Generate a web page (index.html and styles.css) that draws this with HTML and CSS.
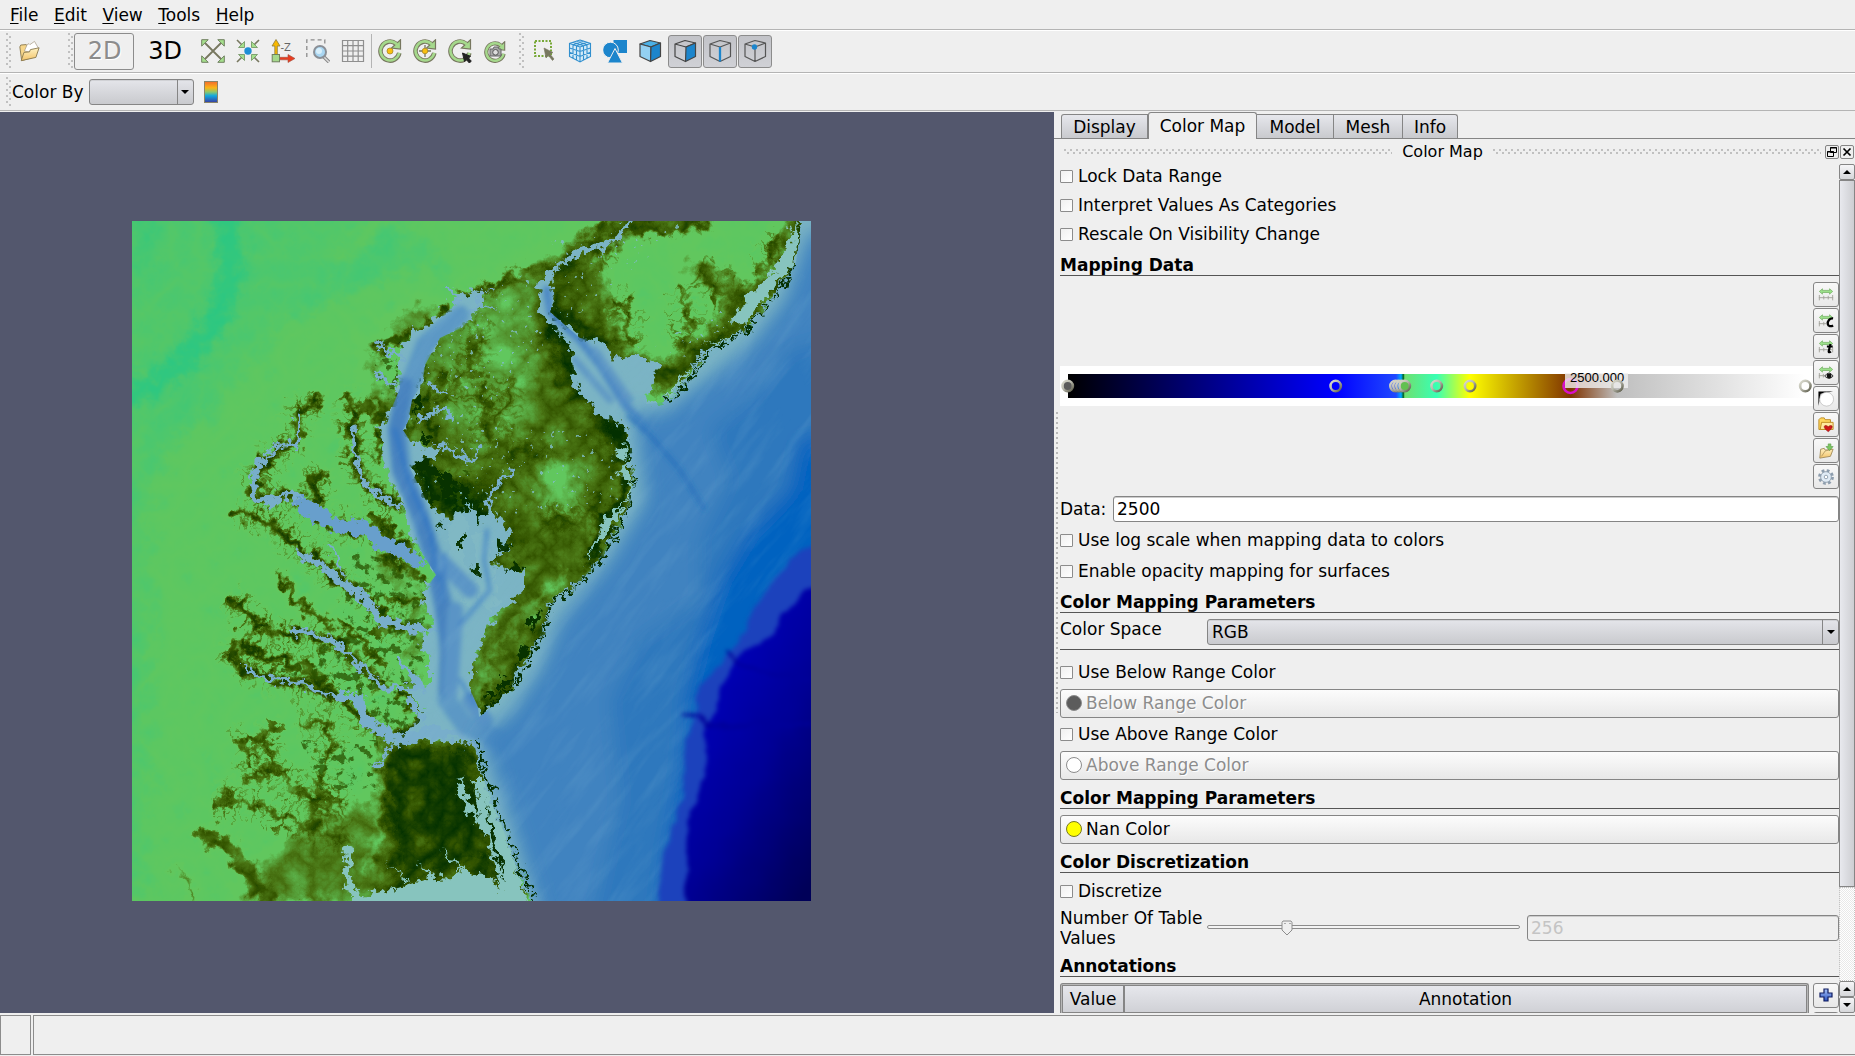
FILE: index.html
```html
<!DOCTYPE html>
<html lang="en">
<head>
<meta charset="utf-8">
<title>Color Map</title>
<link rel="stylesheet" href="styles.css">
</head>
<body>
<svg width="0" height="0" class="defs">
  <defs>
    <linearGradient id="folder" x1="0" y1="0" x2="0" y2="1"><stop offset="0" stop-color="#fff2c4"/><stop offset="1" stop-color="#f3c46a"/></linearGradient>
    <linearGradient id="rainbow" x1="0" y1="0" x2="0" y2="1"><stop offset="0" stop-color="#f26a2c"/><stop offset=".3" stop-color="#fbb515"/><stop offset=".5" stop-color="#8cc86a"/><stop offset=".68" stop-color="#10a8e0"/><stop offset="1" stop-color="#3b3ba0"/></linearGradient>
    <linearGradient id="metal" x1="0" y1="0" x2="1" y2="1"><stop offset="0" stop-color="#dcdcd0"/><stop offset=".45" stop-color="#b8b8ac"/><stop offset="1" stop-color="#5a5a48"/></linearGradient>
    <linearGradient id="plus" x1="0" y1="0" x2="0" y2="1"><stop offset="0" stop-color="#a8c4f8"/><stop offset="1" stop-color="#2850c0"/></linearGradient>
    <symbol id="range" viewBox="0 0 18 18">
      <path d="M1.500 5 5 2v1.800h8V2l3.500 3L13 8V6.200H5V8z" fill="#9be08a" stroke="#6faf5f" stroke-width=".8"/>
    </symbol>
    <symbol id="rotate" viewBox="0 0 24 24">
      <path d="M21.300 14A9.500 9.500 0 1 1 18 4.700" fill="none" stroke="#77775f" stroke-width="4.600"/>
      <path d="M22.500 .8v9.200l-9-1z" fill="#a5d98c" stroke="#77775f" stroke-width="1.200"/>
      <path d="M21.300 13.700A9.500 9.500 0 1 1 19 5.500" fill="none" stroke="#a5d98c" stroke-width="2.600"/>
    </symbol>
    <symbol id="opener" viewBox="0 0 24 24">
      <path d="M2 7.500l1-2 6-.5 1 2 7-.500 1 12-14 4z" fill="#f7d68a" stroke="#8a7a50"/>
      <path d="M7 12l3-7 2-1 1 1 5-3.500 4 7-3 6z" fill="#fff" stroke="#a89c88" stroke-width=".8"/>
      <path d="M3.500 22.500 6.500 13.500l6-.5 1-2.500 9.500-2-3.500 10.500z" fill="url(#folder)" stroke="#8a7a50"/>
    </symbol>
  </defs>
</svg>

<nav class="menubar"><span><u>F</u>ile</span><span><u>E</u>dit</span><span><u>V</u>iew</span><span><u>T</u>ools</span><span><u>H</u>elp</span></nav>

<div class="toolbar main-tools">
  <i class="grip"></i>
  <button class="tool open"><svg viewBox="0 0 24 24"><use href="#opener"/></svg></button>
  <i class="grip"></i>
  <button class="mode active">2D</button>
  <button class="mode">3D</button>
  <button class="tool"><svg viewBox="0 0 24 24"><path d="M4 4 20 20M20 4 4 20" stroke="#77775f" stroke-width="1.800"/><g fill="#a5e08c" stroke="#6f7f5f"><path d="M.7.7h6.500L.7 7.200zM23.300.7v6.500L16.800.7zM.7 23.300v-6.500l6.500 6.500zM23.300 23.300h-6.500l6.500-6.500z"/></g></svg></button>
  <button class="tool"><svg viewBox="0 0 24 24"><path d="M1 1 6 6M23 1l-5 5M1 23l5-5M23 23l-5-5" stroke="#77775f" stroke-width="1.600"/><g fill="#a5e08c" stroke="#6f8f5f" stroke-width=".8"><path d="M8.500 8.500H2.500l6-6zM15.500 8.500v-6l6 6zM8.500 15.500v6l-6-6zM15.500 15.500h6l-6 6z"/></g><circle cx="12" cy="12" r="3.700" fill="#1e8fd5"/></svg></button>
  <button class="tool"><svg viewBox="0 0 24 24"><path d="M3.800 16V7H1l4-6.500L9 7H6.300v9z" fill="#f8b800" stroke="#8a7a40" stroke-width=".8"/><path d="M8 18.300h9V15.500l7 4-7 4v-2.700H8z" fill="#e83c20" stroke="#a05040" stroke-width=".6"/><rect x="1.200" y="15.500" width="7.300" height="7.300" fill="#a5d98c" stroke="#6f7f5f"/><text x="9.500" y="11.800" class="axis">-Z</text></svg></button>
  <button class="tool"><svg viewBox="0 0 24 24"><path d="M.8 18V.8h18V6" fill="none" stroke="#8c8c8c" stroke-width="1.300" stroke-dasharray="4 3"/><path d="m17.500 17.500 5.500 5.500" stroke="#888" stroke-width="3.500"/><path d="m17.500 17.500 5.500 5.500" stroke="#ddd" stroke-width="1.500"/><circle cx="14" cy="13" r="6" fill="#a9d6f2" stroke="#8a8f96" stroke-width="2"/><circle cx="13" cy="12" r="3" fill="#d8effb"/></svg></button>
  <button class="tool"><svg viewBox="0 0 24 24"><path d="M1.500 1.500h21v21h-21zM6.700 1.500v21M12 1.500v21M17.200 1.500v21M1.500 6.700h21M1.500 12h21M1.500 17.200h21" fill="none" stroke="#8f8f8f" stroke-width="1.200"/></svg></button>
  <i class="sep"></i>
  <button class="tool"><svg viewBox="0 0 24 24"><use href="#rotate"/><circle cx="12" cy="12" r="3" fill="#f8c010" stroke="#a8862a" stroke-width=".8"/></svg></button>
  <button class="tool"><svg viewBox="0 0 24 24"><use href="#rotate"/><path d="M12 6v12M6 12h12" stroke="#77775f" stroke-width="1.300"/><circle cx="12" cy="12" r="2.800" fill="#f8c010" stroke="#a8862a" stroke-width=".8"/></svg></button>
  <button class="tool"><svg viewBox="0 0 24 24"><use href="#rotate"/><path d="m14.500 14 2 8.500 1.800-2 3 3.500 2-1.800-3-3.400 2.200-1.500z" fill="#222" stroke="#222"/></svg></button>
  <button class="tool"><svg viewBox="0 0 24 24"><g transform="translate(1 2) scale(.92)"><use href="#rotate" width="24" height="24"/></g><path d="M7 10h3l1-2h4l1 2h2v7H7z" fill="#a8a8a8" stroke="#666"/><circle cx="12.500" cy="13.300" r="2.800" fill="#ddd" stroke="#555"/></svg></button>
  <i class="grip wide"></i>
  <button class="tool"><svg viewBox="0 0 24 24"><path d="M2 2h16v15H2z" fill="none" stroke="#78a838" stroke-width="2" stroke-dasharray="2 1.500"/><path d="m11 9 9 4.500-3 1.500 4 5-1.500 1.500-4-5-2.500 2.500z" fill="#77775f" stroke="#77775f" stroke-width=".6"/></svg></button>
  <button class="tool"><svg viewBox="0 0 24 24"><path d="m12 1 10.500 3.500v13L12 23 1.500 17.500v-13z" fill="#d4ebf8"/><path d="m12 1 10.500 3.500v13L12 23 1.500 17.500v-13zM1.500 4.500 12 8l10.500-3.500M12 8v15M5 5.700v14M8.500 6.800v14.500M15.500 6.800v14.500M19 5.700v14M1.500 9 12 12.500 22.500 9M1.500 13.300 12 17.500l10.500-4.200M5 3.300l10.500 3.500M8.500 2l10.500 3.700M19 3.300 8.500 6.800M15.500 2 5 5.700" fill="none" stroke="#318fce" stroke-width="1.100"/></svg></button>
  <button class="tool"><svg viewBox="0 0 24 24" fill="#1c85cc"><rect x="10.500" y="1" width="13.500" height="13"/><circle cx="7.500" cy="11" r="7.800" stroke="#efefef"/><path d="m12 9.500 7.500 14.500h-15z" stroke="#efefef"/></svg></button>
  <button class="tool"><svg viewBox="0 0 24 24" stroke="#454545" stroke-width="1.200" stroke-linejoin="round"><path d="m2 5 10-3.500L22.500 4 13 8z" fill="#4bb0e6"/><path d="M2 5l11 3-.5 14.500L2 17.500z" fill="#93d0f2"/><path d="m13 8 9.500-4v13.500l-10 5z" fill="#1c85cc"/></svg></button>
  <button class="tool pressed first"><svg viewBox="0 0 24 24" fill="none" stroke="#454545" stroke-width="1.200" stroke-linejoin="round"><path d="m2 5 10-3.500L22.500 4 13 8zM2 5v12.500l10.500 5"/><path d="m13 8 9.500-4v13.500l-10 5z" fill="#1c85cc"/></svg></button>
  <button class="tool pressed"><svg viewBox="0 0 24 24" fill="none" stroke="#555" stroke-width="1.200" stroke-linejoin="round"><path d="m2 5 10-3.500L22.500 4 12 8zM2 5v12.500l10 5 10.500-5V4"/><path d="M12 8v14.500" stroke="#1c85cc" stroke-width="2.300"/></svg></button>
  <button class="tool pressed"><svg viewBox="0 0 24 24" fill="none" stroke="#555" stroke-width="1.200" stroke-linejoin="round"><path d="m2 5 10-3.500L22.500 4 12 8zM2 5v12.500l10 5 10.500-5V4M12 8v14.500"/><circle cx="11.500" cy="8" r="2.700" fill="#1c85cc" stroke="none"/></svg></button>
</div>

<div class="toolbar color-tools">
  <i class="grip"></i><span class="color-by">Color By</span>
  <div class="combo small"><span></span><b class="arrow"></b></div>
  <svg class="ramp-icon" width="14" height="22"><rect x=".5" y=".5" width="13" height="21" fill="url(#rainbow)" stroke="#8a8468"/></svg>
</div>

<main>
<section class="view">
<svg class="terrain" viewBox="132 221 679 680" width="679" height="680">
  <defs>
    <filter id="elevation" x="132" y="221" width="679" height="680" filterUnits="userSpaceOnUse" color-interpolation-filters="sRGB">
      <feTurbulence type="turbulence" baseFrequency=".035" numOctaves="5" seed="8" result="t"/>
      <feColorMatrix in="t" values="1.200 0 0 0 0 1.200 0 0 0 0 1.200 0 0 0 0 0 0 0 0 1" result="n"/>
      <feTurbulence type="fractalNoise" baseFrequency=".08" numOctaves="4" seed="4" result="w"/>
      <feDisplacementMap in="SourceGraphic" in2="w" scale="24" xChannelSelector="R" yChannelSelector="G" result="d"/>
      <feComposite in="d" in2="n" operator="arithmetic" k1="-.3" k2="1" k3=".3" k4="-.06"/>
      <feComponentTransfer>
        <feFuncR type="table" tableValues=".012 .086 .204 .29 .337 .384 .384 .36 .29 .19 .11"/>
        <feFuncG type="table" tableValues=".19 .243 .333 .46 .62 .784 .784 .784 .784 .784 .776"/>
        <feFuncB type="table" tableValues="0 0 0 .08 .22 .37 .37 .384 .44 .5 .54"/>
        <feFuncA type="linear" slope="0" intercept="1"/>
      </feComponentTransfer>
    </filter>
    <filter id="coast" x="100" y="190" width="740" height="740" filterUnits="userSpaceOnUse" color-interpolation-filters="sRGB">
      <feTurbulence type="fractalNoise" baseFrequency=".13" numOctaves="3" seed="3"/>
      <feDisplacementMap in="SourceGraphic" scale="17" xChannelSelector="R" yChannelSelector="G"/>
    </filter>
    <filter id="shelf" x="500" y="400" width="400" height="540" filterUnits="userSpaceOnUse" color-interpolation-filters="sRGB">
      <feTurbulence type="fractalNoise" baseFrequency=".04" numOctaves="4" seed="7"/>
      <feDisplacementMap in="SourceGraphic" scale="12" xChannelSelector="R" yChannelSelector="G"/>
      <feGaussianBlur stdDeviation="2.200"/>
    </filter>
    <filter id="swell" x="0" y="0" width="1000" height="1000" filterUnits="userSpaceOnUse" color-interpolation-filters="sRGB">
      <feTurbulence type="fractalNoise" baseFrequency=".014 .08" numOctaves="4" seed="5"/>
      <feColorMatrix values="0 0 0 0 .55 0 0 0 0 .75 0 0 0 0 .85 1.600 0 0 0 -.7"/>
    </filter>
    <filter id="speck" x="132" y="221" width="679" height="680" filterUnits="userSpaceOnUse" color-interpolation-filters="sRGB">
      <feTurbulence type="fractalNoise" baseFrequency=".11" numOctaves="5" seed="11"/>
      <feColorMatrix values="0 0 0 0 .16 0 0 0 0 .32 0 0 0 0 0 9 0 0 0 -5"/>
      <feComposite in2="SourceAlpha" operator="in"/>
    </filter>
    <filter id="glint" x="132" y="221" width="679" height="680" filterUnits="userSpaceOnUse" color-interpolation-filters="sRGB">
      <feTurbulence type="fractalNoise" baseFrequency=".2" numOctaves="2" seed="21"/>
      <feColorMatrix values="0 0 0 0 .5 0 0 0 0 .74 0 0 0 0 .78 26 0 0 0 -18.500"/>
      <feComposite in2="SourceAlpha" operator="in"/>
    </filter>
    <filter id="b2" x="-40%" y="-40%" width="180%" height="180%"><feGaussianBlur stdDeviation="1.300"/></filter>
    <filter id="b3" x="-40%" y="-40%" width="180%" height="180%"><feGaussianBlur stdDeviation="2.500"/></filter>
    <filter id="b10" x="-40%" y="-40%" width="180%" height="180%"><feGaussianBlur stdDeviation="9"/></filter>
    <linearGradient id="deep" gradientUnits="userSpaceOnUse" x1="690" y1="720" x2="850" y2="810"><stop offset="0" stop-color="#0000b8"/><stop offset=".45" stop-color="#000096"/><stop offset="1" stop-color="#000058"/></linearGradient>
    <path id="valleys" d="M298 408 297 442 262 462 252 490 268 503 293 492 313 515 340 530 370 530 413 555M298 412 318 400M352 425 357 462 363 482 397 508M346 395 356 410 350 430M320 505 312 480 325 470M235 513 265 520 290 540 317 560 341 583 368 600 385 622 412 628M230 598 250 618 270 632 293 632 332 640 354 660 385 688M245 645 265 655 300 665 325 680M232 642 235 662 244 670 262 678 302 683 341 697 365 720 401 738"/>
    <path id="creeks" d="M250 760 242 745 250 735 266 737 273 767 310 800 313 823M330 720 332 753 317 787 315 820M300 725 330 722M215 805 262 805 284 817 310 827 346 840M222 788 236 805M273 767 245 780M345 800 320 805M480 325 470 370 440 400M550 445 505 455 512 470 500 490M545 520 580 525 600 500M480 390 490 440 515 380M630 340 628 310 615 300M680 290 690 330 680 350M583 260 610 245M700 270 720 290 750 300M780 240 760 270"/>
    <path id="sea" d="M802 215 796 262 783 282 763 308 747 328 703 352 683 385 663 402 646 404 653 382 660 365 637 355 617 360 603 342 580 338 550 312 555 293 548 285 562 265 587 252 620 243 625 228 634 218 628 219 619 228 615 240 580 247 555 266 537 284 541 295 540 312 553 328 572 348 573 382 587 398 603 418 627 425 630 448 632 482 628 505 613 535 595 565 570 587 548 603 544 627 533 650 513 677 509 693 479 717 478 707 469 687 478 647 491 623 509 603 526 587 526 573 495 565 490 562 507 548 510 535 500 518 488 508 480 525 470 502 457 522 430 508 417 482 410 468 443 450 413 445 403 430 408 422 412 400 423 382 425 365 440 338 463 327 480 310 487 292 477 290 458 297 452 307 428 328 417 328 403 345 397 358 400 388 390 412 378 432 387 478 403 498 403 515 417 545 436 575 422 593 434 627 420 640 429 660 429 683 404 687 423 710 412 727 401 737 392 747 416 740 456 743 473 742 482 777 495 810 508 843 517 870 535 910 830 910 830 215z"/>
    <clipPath id="seaClip"><use href="#sea"/></clipPath>
  </defs>

  <!-- ground elevation as grey levels, coloured by the filter -->
  <g filter="url(#elevation)" fill="none" stroke-linejoin="round" stroke-linecap="round">
    <rect x="100" y="190" width="760" height="760" fill="#a6a6a6"/>
    <g filter="url(#b10)">
      <path d="M100 190h280L240 380 100 520z" fill="#c0c0c0"/>
      <path d="M100 190H150V900H100z" fill="#bcbcbc"/>
      <path d="M225 200 232 270 212 330 170 375 120 400" stroke="#f6f6f6" stroke-width="16"/>
      <path d="M150 190 138 280" stroke="#e0e0e0" stroke-width="12"/>
      <path d="M300 310 400 230M150 450 200 400M330 290 430 250" stroke="#cacaca" stroke-width="20"/>
      <path d="M470 300 540 260 600 250 640 420 650 510 590 590 530 680 480 730 455 700 475 640 500 600 490 540 400 500 390 410 420 340z" fill="#3a3a3a"/>
      <path d="M460 300 530 285 535 380 520 440 470 450 435 400 440 340z" fill="#626262"/>
      <path d="M545 460 578 475 575 515 540 510z" fill="#787878"/>
      <path d="M556 270 600 240 640 215 700 215M560 310 600 345 640 370 665 380 740 320 790 270 800 215" stroke="#0c0c0c" stroke-width="26"/>
      <path d="M690 265 740 290 725 320" stroke="#303030" stroke-width="20"/>
      <path d="M378 735H480L530 910H340L340 830 380 820z" fill="#1a1a1a"/>
      <path d="M382 745H465L500 860 400 880 384 820z" fill="#0c0c0c"/>
      <path d="M546 320 580 380 610 420 628 460" stroke="#040404" stroke-width="34"/>
      <path d="M320 815 380 800 375 905 230 905 270 850z" fill="#4c4c4c"/>
      <path d="M420 480 470 510 490 550" stroke="#000" stroke-width="48"/>
      <path d="M600 590 560 620 480 720" stroke="#101010" stroke-width="20"/>
      <path d="M395 330 430 310M370 350 385 420M380 560 420 600 410 710" stroke="#303030" stroke-width="16"/>
    </g>
    <g filter="url(#b2)" stroke-dasharray="2 7" stroke-linecap="butt">
      <use href="#valleys" stroke="#383838" stroke-width="34"/>
      <use href="#creeks" stroke="#383838" stroke-width="36"/>
    </g>
    <g filter="url(#b3)" stroke="#181818" stroke-width="8">
      <use href="#valleys" stroke-width="10"/>
      <use href="#creeks" stroke="#202020" stroke-width="7"/>
      <path d="M477 300 430 325 400 340 375 350M400 390 385 420 378 445M413 370 405 430M440 380 425 400 435 440M280 575 300 605 330 625M330 570 400 630M378 460 380 400M380 520 410 555M385 560 425 580M390 600 425 600M340 620 385 665"/>
      <path d="M205 835 230 845 250 875 270 905" stroke="#303030" stroke-width="17"/>
      <path d="M176 868 192 885 192 905M310 850 305 880 320 905" stroke="#444" stroke-width="6"/>
      <path d="M376 800 378 840 364 870" stroke="#606060" stroke-width="8"/>
      <path d="M478 700 488 660 520 620 565 575" stroke="#585858" stroke-width="8"/>
      <path d="M400 690 425 720 405 735M625 435 625 490 590 560 600 520" stroke="#000"/>
      <path d="M530 270 500 285 460 300M600 225 660 230 700 222" stroke="#282828" stroke-width="10"/>
    </g>
  </g>
  <g filter="url(#speck)" opacity=".75">
    <path d="M370 345 440 320 430 380 400 470 370 460 385 410z"/>
    <path d="M400 470 480 470 500 520 450 540z"/>
    <path d="M350 550 425 570 425 730 380 735 330 680 260 675 300 650 340 640z"/>
    <path d="M300 740 378 740 378 790 320 790z"/>
  </g>
  <path filter="url(#glint)" d="M440 290 550 270 560 330 590 340 640 350 740 300 770 320 700 360 560 330 480 420 630 440 620 500 500 520 410 480 430 350zM550 240 690 222 560 330 545 290z" opacity=".8"/>

  <!-- open water, bays and rivers -->
  <g filter="url(#coast)">
    <use href="#sea" fill="#7bb4c4"/>
    <g fill="none" stroke="#78aecb" stroke-linecap="round" stroke-linejoin="round">
      <path d="M298 415 297 442 280 445 260 462" stroke-width="5"/>
      <path d="M260 462 252 482 255 498 267 503 293 492 303 505" stroke-width="7"/>
      <path d="M303 505 337 526 363 528 383 542 415 560" stroke-width="14" stroke="#689fcc"/>
      <path d="M352 428 357 462 363 482 383 498 407 508" stroke-width="4.500"/>
      <path d="M300 555 319 563 341 583 368 600 381 622 412 628 434 630" stroke-width="7"/>
      <path d="M293 630 332 640 354 660 385 688 420 687" stroke-width="5"/>
      <path d="M244 667 262 678 302 683 319 693 341 697" stroke-width="4"/>
      <path d="M341 697 359 697 363 720 385 732 405 740 429 732 473 735" stroke-width="10"/>
      <path d="M448 290 458 300M378 345 403 358M375 375 397 385M430 385 445 395M420 420 445 405 452 420M440 445 470 462 480 450M487 510 490 495 503 478 513 470" stroke-width="4"/>
      <path d="M470 315 480 305 497 308M475 300 490 290M330 545 345 575M392 745 378 765M500 750 470 745" stroke-width="3"/>
      <path d="M408 700 425 720M400 660 425 690" stroke-width="6"/>
      <path d="M460 520 455 560 470 600M480 540 490 600" stroke-width="16" stroke="#80b8c4"/>
    </g>
    <g fill="#87c4be">
      <path d="M346 845 352 848 350 870 358 895 400 888 425 880 448 878 462 872 445 852 438 850 448 852 465 872 485 875 495 880 500 890 488 840 470 815 458 790 462 778 468 800 478 818 474 780 484 780 508 843 520 880 528 905 350 905 344 870z"/>
      <path d="M385 860 405 880 425 884 408 880zM415 862 430 880 438 882z"/>
      <path d="M797 215 785 250 770 275 745 298 730 325 745 322 775 285 795 260zM690 365 665 398 680 388zM700 345 740 335 720 342z"/>
      <path d="M625 445 614 455 628 462 615 475 630 478 625 500 605 520 585 560 610 530 632 490z"/>
    </g>
    <g fill="#083200">
      <path d="M440 470 455 480 452 500 440 490zM425 480 440 500 432 508zM460 530 466 545 460 550zM440 520 444 528 438 530zM470 568 480 566 478 575z"/>
      <path d="M528 620 540 610 532 635zM520 645 530 650 515 668zM500 675 512 680 500 695zM485 690 498 690 488 700zM415 395 424 402 416 418zM420 430 434 440 418 445zM415 460 430 462 440 475 425 480zM458 480 472 490 462 500zM410 375 418 380 408 395zM496 540 510 545 498 552zM515 560 526 570 508 572z"/>
      <path d="M486 800 492 825 498 850 504 880 497 860 490 835zM468 780 474 800 480 815 474 812z"/>
    </g>
  </g>
  <g clip-path="url(#seaClip)">
    <g filter="url(#b3)" fill="none" stroke-linecap="round" stroke-linejoin="round">
      <path d="M460 315 425 345 410 385 398 430 402 470 418 510 430 550 445 610 450 660 447 700 465 725 500 740" stroke="#5b98c5" stroke-width="19"/>
      <path d="M405 385 396 430 400 470 420 515 435 560 448 640 447 690" stroke="#4682bf" stroke-width="16"/>
      <path d="M440 560 470 590M455 610 450 690M470 700 485 720" stroke="#5a94c6" stroke-width="16"/>
      <path d="M487 530 484 560 490 590 460 625M445 555 442 600M460 680 475 705" stroke="#3d7fc6" stroke-width="3"/>
      <path d="M395 430 410 485 430 530 438 580" stroke="#2d74c4" stroke-width="3.500"/>
      <path d="M547 290 550 312 580 340 600 365 625 405 650 430" stroke="#4c88c4" stroke-width="8"/>
      <path d="M575 360 610 400M595 350 630 400" stroke="#5f98c5" stroke-width="7"/>
    </g>
    <g filter="url(#b10)">
      <path d="M860 215 808 235 785 300 750 345 700 385 665 412 635 412 645 500 610 560 560 620 540 670 510 715 480 735 500 790 520 850 545 930 860 930z" fill="#4183c0"/>
      <path d="M860 330 790 350 750 400 710 430 730 480 700 540 700 600 640 640 610 700 620 800 590 930 860 930z" fill="#2d78bd"/>
      <path d="M860 430 800 440 790 490 750 530 720 580 700 640 685 700 680 770 665 850 655 930 860 930z" fill="#0462c0"/>
    </g>
    <path d="M627 415 650 435 680 470 705 510" fill="none" stroke="#246dbc" stroke-width="3" filter="url(#b3)"/>
    <g opacity=".22"><rect x="0" y="0" width="1000" height="1000" filter="url(#swell)" transform="rotate(-52 650 600)"/></g>
    <g filter="url(#shelf)">
      <path d="M840 530 800 550 770 585 735 645 700 690 688 740 682 800 665 850 655 920 840 920z" fill="#1c42bc"/>
      <path d="M840 570 805 590 790 610 770 635 738 655 727 680 713 710 706 730 704 780 692 810 686 850 688 920 840 920z" fill="url(#deep)"/>
      <path d="M727 650 735 660 775 675 811 680M682 714 697 716 706 725 811 724" fill="none" stroke="#00009a" stroke-width="3"/>
    </g>
  </g>
  <path d="M479 742 486 777 499 810 512 843 521 870 535 903M482 712 512 688 533 655 547 625 551 603 572 590 595 568 614 538 630 505 634 480M667 402 685 388 705 355 748 330 766 308 785 284 797 262" fill="none" stroke="#063000" stroke-width="2.600" stroke-dasharray="7 3 3 2 12 3" filter="url(#coast)"/>
</svg>
</section>

<aside class="panel">
  <div class="tabs"><span>Display</span><span class="on">Color Map</span><span>Model</span><span>Mesh</span><span>Info</span></div>
  <header class="dock-title"><i></i><b>Color Map</b><i></i>
    <button><svg viewBox="0 0 12 12"><path d="M4.500 1.500h6v5h-6zM1.500 5.500h6v5h-6z" fill="#efefef" stroke="#000"/><path d="M4 2h7M1 6h7" stroke="#000"/></svg></button><button><svg viewBox="0 0 12 12"><path d="m2.500 2.500 7 7m0-7-7 7" stroke="#000" stroke-width="1.700"/></svg></button>
  </header>
  <div class="dock-body">
    <i class="splitter"></i>
    <div class="content">
      <label class="check"><i></i>Lock Data Range</label>
      <label class="check"><i></i>Interpret Values As Categories</label>
      <label class="check"><i></i>Rescale On Visibility Change</label>
      <h2 class="h27">Mapping Data</h2>
      <div class="editor">
        <div class="ramp"><div class="bar"></div>
          <svg class="knobs" width="753" height="40" viewBox="1060 366 753 40" fill="none" stroke="url(#metal)" stroke-width="2.600">
            <circle cx="1067.700" cy="386" r="5.200" fill="#5c5c5c"/><circle cx="1335.700" cy="386" r="5.200"/><circle cx="1395.500" cy="386" r="5.200"/><circle cx="1398.500" cy="386" r="5.200"/><circle cx="1401.500" cy="386" r="5.200"/><circle cx="1404.700" cy="386" r="5.200" fill="#62c050"/><circle cx="1436.700" cy="386" r="5.200"/><circle cx="1470" cy="386" r="5.200"/><circle cx="1570.500" cy="386" r="7" stroke="#d810c8"/><circle cx="1617.300" cy="386" r="5.200" fill="#bebebe"/><circle cx="1805.300" cy="386" r="5.200" fill="#fff"/>
          </svg>
          <span class="tip">2500.000</span>
          <svg class="knobs" width="753" height="40" viewBox="1060 366 753 40" fill="none"><circle cx="1617.300" cy="386" r="5.200" stroke="url(#metal)" stroke-width="2.600"/></svg>
        </div>
        <div class="side">
          <button><svg viewBox="0 0 18 18"><use href="#range"/><path d="M1.500 9v6M16.500 9v6M6.500 10v4M11.500 10v4M1 12h16" stroke="#a0a098" fill="none"/></svg></button>
          <button><svg viewBox="0 0 18 18"><use href="#range"/><path d="M1.500 9v6M6.500 10v4M1 12h8" stroke="#a0a098"/><path d="M17 6c-4-.5-6.500 3-6 6.500.5 2.500 3.500 3 6 1.500" fill="none" stroke="#000" stroke-width="2.600"/></svg></button>
          <button><svg viewBox="0 0 18 18"><use href="#range"/><path d="M1.500 9v6M6.500 10v4M1 12h15M16.500 9v6" stroke="#a0a098"/><path d="M14 5.500 12 14c0 1.500 1.500 1 2.500 0M10 8.500h6.500" fill="none" stroke="#000" stroke-width="2.400"/></svg></button>
          <button><svg viewBox="0 0 18 18"><use href="#range"/><path d="M1.500 9v6M6 10v4M1 12h6" stroke="#a0a098"/><path d="M7.500 12.500q5-7 9.500 0-4.500 5-9.500 0z" fill="#fff" stroke="#222"/><circle cx="12.500" cy="12.300" r="2.800" fill="#111"/></svg></button>
          <button><svg viewBox="0 0 18 18"><path d="M.5 17V.5H17L3 3z" fill="#000"/><circle cx="9.700" cy="9.200" r="7.800" fill="#fff" stroke="#bbb" stroke-width=".8"/></svg></button>
          <button class="gap"><svg viewBox="0 0 18 18"><path d="M1 14V3l2-2h4l1 2h6v11z" fill="#ffd75e" stroke="#b98518"/><path d="M4 6h13v8H2.500z" fill="#ffe9a0" stroke="#b98518"/><path d="M11.500 16.500c-8-5.500-3.500-9 0-5.500 3.500-3.500 8 0 0 5.500z" fill="#d01818" stroke="#8a0c0c" stroke-width=".6"/></svg></button>
          <button><svg viewBox="0 0 18 18"><path d="M2 17 3 7l4-1 1 2 9-1-3 8z" fill="url(#folder)" stroke="#a08a58"/><path d="m4 15 4-6 8-2" fill="none" stroke="#b59b62"/><path d="M9 4h2.500V1h3v3H17l-4 4.500z" fill="#7cc860" stroke="#5a9a48" stroke-width=".7"/></svg></button>
          <button><svg viewBox="0 0 18 18"><circle cx="9" cy="9" r="7.200" fill="none" stroke="#8d9dad" stroke-width="3.400" stroke-dasharray="3 2.650"/><circle cx="9" cy="9" r="6" fill="#e0ebf5" stroke="#8d9dad"/><circle cx="9" cy="9" r="2" fill="#fff" stroke="#8d9dad"/></svg></button>
        </div>
      </div>
      <div class="data-row"><span>Data:</span><div class="field">2500</div></div>
      <label class="check c31"><i></i>Use log scale when mapping data to colors</label>
      <label class="check c31"><i></i>Enable opacity mapping for surfaces</label>
      <h2 class="h26">Color Mapping Parameters</h2>
      <div class="space-row"><span>Color Space</span><div class="combo"><span>RGB</span><b class="arrow"></b></div></div>
      <label class="check c31 push"><i></i>Use Below Range Color</label>
      <button class="swatch off"><i class="dark"></i>Below Range Color</button>
      <label class="check c33"><i></i>Use Above Range Color</label>
      <button class="swatch off"><i class="pale"></i>Above Range Color</button>
      <h2>Color Mapping Parameters</h2>
      <button class="swatch nan"><i class="yellow"></i>Nan Color</button>
      <h2>Color Discretization</h2>
      <label class="check c37"><i></i>Discretize</label>
      <div class="number-row"><span>Number Of Table Values</span>
        <div class="slider"><svg width="12" height="16" viewBox="0 0 12 16"><path d="M1 2.500 2 1h8l1 1.500V10l-5 5-5-5z" fill="#efefef" stroke="#8c8c8c"/><path d="M3 3.500h2M8 3.500h2" stroke="#aaa"/></svg></div>
        <div class="field disabled">256</div></div>
      <h2>Annotations</h2>
      <div class="table-row"><div class="table"><span>Value</span><span>Annotation</span></div>
        <div class="table-tools"><button><svg viewBox="0 0 14 14"><path d="M5 1h4v4h4v4H9v4H5V9H1V5h4z" fill="url(#plus)" stroke="#101c60" stroke-width="1.200"/></svg></button><button></button></div></div>
    </div>
    <div class="scroll"><b class="btn up"></b><i class="thumb"></i><i class="track"></i><b class="btn up"></b><b class="btn down"></b></div>
  </div>
</aside>
</main>
<footer class="status"><i></i><i></i></footer>
</body>
</html>
```
FILE: styles.css
```css
* { box-sizing: border-box; }
html, body { margin: 0; }
body { width: 1855px; height: 1056px; overflow: hidden; background: #efefef; color: #000; font: 17px/20px "DejaVu Sans", sans-serif; display: flex; flex-direction: column; }
button { font: inherit; color: inherit; padding: 0; margin: 0; border: 0; background: none; }
.defs { position: absolute; }
.menubar { height: 30px; flex: none; border-bottom: 1px solid #b4b4b4; padding: 5px 0 0 10px; display: flex; gap: 15.500px; }
.menubar u { text-underline-offset: 2px; text-decoration-thickness: 1px; }
.toolbar { flex: none; display: flex; align-items: center; border-top: 1px solid #fff; border-bottom: 1px solid #b4b4b4; }
.main-tools { height: 43px; padding: 0 0 1px 6px; }
.color-tools { height: 38px; padding-left: 6px; }
.grip { width: 6px; height: 36px; flex: none; background-image: radial-gradient(circle at 1px 1px, #c0c0c0 1px, transparent 1.300px), radial-gradient(circle at 1px 1px, #c0c0c0 1px, transparent 1.300px); background-size: 6px 6px; background-position: 0 0, 3px 3px; }
.color-tools .grip { height: 30px; }
.tool { width: 35px; height: 33px; display: grid; place-items: center; flex: none; }
.tool svg { width: 24px; height: 24px; }
.tool.open { margin: 0 22px 0 -1px; }
.tool.open svg { width: 22px; height: 22px; }
.axis { font: 10px "DejaVu Sans", sans-serif; fill: #666; }
.mode { width: 60px; height: 37px; font-size: 24px; flex: none; }
.mode.active { margin-right: 1px; padding-left: 1px; border: 1px solid #8c8c8c; border-radius: 3px; color: #8c8c8c; text-shadow: 1px 1px #fff; }
.sep { width: 1px; height: 34px; background: #b4b4b4; margin: 0 1px 0 .5px; }
.grip.wide { margin: 0 2.500px 0 6px; }
.pressed { border: 1px solid #8c8c8c; border-radius: 3px; background: linear-gradient(#c2c3c8, #d0d1d6); width: 34px; margin-right: 1px; }
.pressed.first { margin-left: 1px; }
.color-by { margin: 0 5px 0 0; }
.combo { height: 26px; border: 1px solid #858585; border-radius: 3px; background: linear-gradient(#e4e5ea, #c9cace); box-shadow: inset 0 1px #d0d1d5; display: flex; align-items: stretch; }
.combo span { flex: 1; padding: 2px 4px; }
.arrow { width: 16px; border-left: 1px solid #858585; display: grid; place-items: center; }
.arrow::before { content: ""; border: 4px solid transparent; border-top-color: #000; border-bottom: 0; }
.combo.small { width: 105px; }
.ramp-icon { margin-left: 10px; }
main { flex: none; height: 902px; display: flex; padding-top: 1px; }
.view { width: 1054px; background: #53576d; flex: none; padding: 109px 0 0 132px; }
.terrain { display: block; overflow: hidden; }
.panel { flex: 1; display: flex; flex-direction: column; min-width: 0; }
.tabs { height: 27px; flex: none; padding-left: 7px; display: flex; align-items: flex-end; border-bottom: 1px solid #858585; }
.tabs span { height: 24px; border: 1px solid #858585; border-width: 1px 1px 0 0; background: linear-gradient(#e6e7ec, #c9cace); text-align: center; padding-top: 2px; }
.tabs span:nth-child(1) { width: 87px; border-left-width: 1px; border-radius: 3px 0 0 0; }
.tabs .on { width: 109px; height: 27px; margin-bottom: -1px; background: #efefef; padding-top: 3px; border-radius: 3px 3px 0 0; border-left-width: 1px; }
.tabs span:nth-child(3) { width: 77px; }
.tabs span:nth-child(4) { width: 69px; }
.tabs span:nth-child(5) { width: 55px; border-radius: 0 3px 0 0; }
.dock-title { height: 23px; flex: none; display: flex; align-items: center; padding: 2px 1px 0 10px; font-size: 16px; }
.dock-title b { font-weight: normal; margin: 0 10px 0 10px; }
.dock-title i { height: 6px; flex: 1; background-image: radial-gradient(circle at 1px 1px, #c0c0c0 1px, transparent 1.300px), radial-gradient(circle at 1px 1px, #c0c0c0 1px, transparent 1.300px); background-size: 6px 6px; background-position: 0 0, 3px 3px; }
.dock-title button { width: 14px; height: 14px; border: 1px solid #858585; border-radius: 2px; margin-left: 1px; display: grid; }
.dock-title i + button { margin-left: 4px; }
.dock-title svg { width: 12px; height: 12px; }
.dock-body { flex: 1; display: flex; min-height: 0; }
.splitter { width: 3px; height: 301px; margin: 250px 1px 0 2px; flex: none; background: radial-gradient(circle at 1px 1px, #b8b8b8 1px, transparent 1.300px); background-size: 3px 5px; }
.content { width: 779px; overflow: hidden; display: flex; flex-direction: column; flex: none; }
.content > * { flex: none; }
.check { display: flex; align-items: center; height: 29px; gap: 5px; padding-bottom: 2px; }
.check i { width: 13px; height: 13px; border: 1px solid #8c8c8c; border-radius: 1px; background: linear-gradient(135deg, #f0f0f0, #fff); position: relative; top: .5px; }
.c31 { height: 31px; } .c33 { height: 33px; } .c37 { height: 35px; padding-bottom: 0; } .push { margin-top: 7px; }
h2 { margin: 0; font-size: 17px; line-height: 20px; height: 29px; display: flex; align-items: flex-end; border-bottom: 1px solid #555; }
.h27 { height: 27px; } .h26 { height: 26px; }
.editor { height: 217px; display: flex; align-items: flex-start; }
.ramp { width: 753px; height: 40px; margin-top: 90px; background: #fff; padding: 8px; position: relative; }
.bar { height: 24px; width: 737px; background: linear-gradient(90deg, #000, #00f 36.300%, #2048ff 44.500%, #00aaff 45.200%, #006020 45.500%, #6ee070 45.700%, #38ffb4 50%, #ff0 54.500%, #7f3300 68.200%, #bfbfbf 74.500%, #fff); }
.knobs { position: absolute; left: 0; top: 0; }
.tip { position: absolute; left: 505px; top: 7px; width: 63px; height: 15px; padding-left: 5px; background: rgba(240,240,240,.8); font: 13px/9px "Liberation Sans", sans-serif; }
.side { width: 26px; padding-top: 6px; display: flex; flex-direction: column; gap: 1px; }
.side button, .table-tools button { width: 26px; height: 25px; flex: none; border: 1px solid #858585; border-radius: 3px; background: linear-gradient(#f8f8f8, #e8e8e8); display: grid; place-items: center; }
.side svg { width: 16px; height: 16px; }
.data-row { height: 26px; margin: 3px 0; display: flex; }
.data-row span { width: 53px; padding-top: 3px; }
.field { height: 26px; border: 1px solid #858585; border-radius: 3px; background: #fff; flex: 1; padding: 2px 3px; box-shadow: inset 0 1px #ccc; }
.space-row { height: 37px; padding-top: 6px; display: flex; border-bottom: 1px solid #555; }
.space-row > span { width: 147px; }
.space-row .combo { width: 632px; }
.swatch { height: 29px; border: 1px solid #858585; border-radius: 3px; background: linear-gradient(#fcfcfc, #e8e8e8); display: flex; align-items: center; padding: 0 0 1px 5px; gap: 4px; }
.content > .push + .swatch { margin-top: 1px; }
.swatch i { width: 16px; height: 16px; border-radius: 50%; border: 1px solid #8c8c8c; }
.off { color: #8c8c8c; text-shadow: 1px 1px #fff; }
.dark { background: #5c5c5c; } .pale { background: #fff; } .swatch .yellow { background: #ff0; border-color: #777722; }
.nan { margin-top: 6px; }
.number-row { height: 40px; display: flex; }
.number-row > span { width: 147px; }
.slider { width: 313px; height: 4px; margin: 17px 7px 0 0; border: 1px solid #8c8c8c; border-radius: 2px; background: #f4f4f4; position: relative; }
.slider svg { position: absolute; left: 73px; top: -6px; }
.number-row .field { margin-top: 7px; }
.field.disabled { background: #efefef; color: #c4c4c4; }
.table-row { margin-top: 6px; height: 40px; display: flex; gap: 4px; }
.table { width: 749px; border: 1px solid #858585; border-bottom: 0; border-radius: 3px 3px 0 0; display: flex; padding: 1px; background: #b8b8b8; }
.table span { height: 28px; border: 1px solid #858585; background: linear-gradient(#e6e7ec, #d0d1d6); text-align: center; padding-top: 3px; }
.table span:first-child { width: 62px; } .table span:last-child { flex: 1; }
.table-tools { display: flex; flex-direction: column; gap: 4px; }
.table-tools svg { width: 14px; height: 14px; margin-top: -1px; }
.scroll { flex: 1; margin-top: 2px; display: flex; flex-direction: column; }
.btn { height: 16px; border: 1px solid #858585; border-radius: 2px; background: linear-gradient(#f6f6f8, #d6d7da); display: grid; place-items: center; }
.btn::before { content: ""; border: 4px solid transparent; }
.up::before { border-bottom-color: #000; border-top: 0; }
.down::before { border-top-color: #000; border-bottom: 0; }
.thumb { height: 707px; border: 1px solid #858585; background: linear-gradient(90deg, #e8e9ee, #cdced2); }
.track { flex: 1; border: 1px dotted #c4c4c4; background: repeating-conic-gradient(#fff 0 25%, #e9e9e9 0 50%) 0 0 / 2px 2px; }
.status { flex: 1; display: flex; gap: 2px; padding: 2px 0 1px; }
.status i { border: 1px solid #8c8c8c; }
.status i:first-child { width: 31px; }
.status i:last-child { flex: 1; border-right: 0; }
```
